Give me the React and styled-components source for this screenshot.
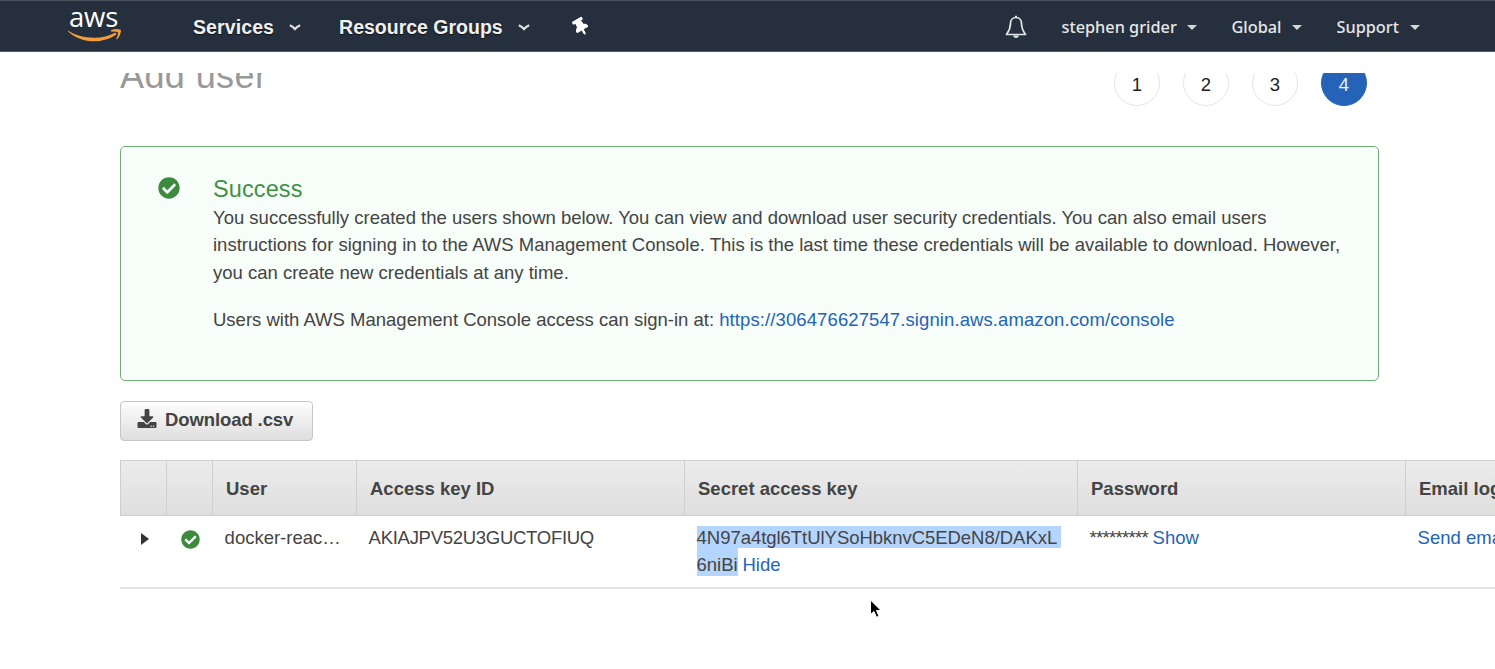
import React from "react";
import styled, { createGlobalStyle } from "styled-components";
import { FaCheckCircle, FaDownload, FaThumbtack } from "react-icons/fa";

const GlobalStyle = createGlobalStyle`
  * { box-sizing: border-box; }
  body {
    margin: 0;
    background: #fff;
    color: #444;
    font-family: "Liberation Sans", Arial, sans-serif;
    font-size: 18.5px;
    line-height: 27px;
    overflow: hidden;
  }
`;

const Page = styled.div`
  height: 669px;
  overflow: hidden;
`;

const NavBar = styled.header`
  display: flex;
  align-items: center;
  height: 52px;
  padding: 0 75px 0 67px;
  background: #252f3d;
  border-top: 1px solid #4b535e;
  border-bottom: 1px solid #555d68;
  color: #f0f0f0;
`;

const Logo = styled.svg`
  display: block;
  flex: none;
  width: 56px;
  height: 40px;
  margin-right: 70px;
  overflow: visible;
`;

const MainMenu = styled.a`
  display: flex;
  align-items: center;
  gap: 15px;
  margin-right: 38px;
  padding-top: 2px;
  font-size: 19.5px;
  font-weight: 700;
  letter-spacing: ${(p) => p.$spacing || "0"};
  text-shadow: 0 1px 1px #111;
  white-space: nowrap;
`;

const Pin = styled(FaThumbtack)`
  width: 14px;
  height: 18px;
  margin: 1px 0 0 6px;
  color: #fff;
  transform: rotate(-30deg);
`;

const Tools = styled.div`
  display: flex;
  align-items: center;
  margin-left: auto;
`;

const Bell = styled.svg`
  display: block;
  width: 22px;
  height: 24px;
  margin: 1px 34px 0 0;
`;

const ToolMenu = styled.a`
  display: flex;
  align-items: center;
  justify-content: space-between;
  width: ${(p) => p.$width}px;
  margin-left: ${(p) => p.$before || 0}px;
  padding: 2px 0 0 0.5px;
  color: #e6e7e8;
  font-family: "Noto Sans", "Open Sans", sans-serif;
  font-size: 16.3px;
  font-weight: 500;
  white-space: nowrap;
`;

const Caret = styled.span`
  border: 5px solid transparent;
  border-top-color: #d5d5d5;
  border-bottom: 0;
`;

const Content = styled.main`
  padding: 21px 0 0 120px;
`;

const TitleRow = styled.div`
  display: flex;
  justify-content: space-between;
  align-items: flex-end;
  width: 1247px;
  height: 34px;
  overflow: hidden;
`;

const Title = styled.h1`
  margin: 0 0 13px;
  color: #999;
  font-size: 36px;
  line-height: 36px;
  font-weight: 400;
  letter-spacing: 0.4px;
`;

const Steps = styled.div`
  display: flex;
  gap: 23px;
`;

const Step = styled.span`
  display: flex;
  align-items: center;
  justify-content: center;
  width: 46px;
  height: 46px;
  margin-bottom: 1px;
  padding-top: 3px;
  border: 1px solid ${(p) => (p.$active ? "#2563b8" : "#e4e4e4")};
  border-radius: 50%;
  background: ${(p) => (p.$active ? "#2563b8" : "#fff")};
  color: ${(p) => (p.$active ? "#e6f1ff" : "#222")};
`;

const Alert = styled.section`
  display: flex;
  width: 1259px;
  height: 235px;
  margin-top: 39px;
  padding: 28px 20px 0 37px;
  border: 1px solid #6fb070;
  border-radius: 5px;
  background: #f7fdf9;
`;

const Check = styled(FaCheckCircle)`
  display: block;
  flex: none;
  width: ${(p) => p.$size}px;
  height: ${(p) => p.$size}px;
  color: #3c8a3e;
`;

const AlertIcon = styled.div`
  flex: none;
  width: 55px;
  padding-top: 2px;
`;

const AlertTitle = styled.h2`
  margin: 0;
  color: #3f9142;
  font-size: 23.5px;
  line-height: 29px;
  font-weight: 400;
  letter-spacing: 0.1px;
`;

const AlertText = styled.p`
  margin: 0 0 20px;
  line-height: 27.3px;
  white-space: nowrap;
`;

const Line = styled.span`
  display: block;
`;

const Link = styled.a`
  color: #2364b8;
  letter-spacing: ${(p) => p.$spacing || "inherit"};
`;

const Download = styled.button`
  display: flex;
  align-items: center;
  gap: 8px;
  width: 193px;
  height: 40px;
  margin: 20px 0 19px;
  padding: 0 0 2px 16px;
  border: 1px solid #c6c6c6;
  border-radius: 4px;
  background: linear-gradient(#fdfdfd, #dedede);
  color: #444;
  font: 700 18.5px "Liberation Sans", Arial, sans-serif;
  letter-spacing: -0.1px;
`;

const DownloadIcon = styled(FaDownload)`
  width: 20px;
  height: 19px;
  margin-top: -4px;
`;

const Grid = styled.div`
  display: grid;
  grid-template-columns: 46px 46px 144px 328px 393px 328px 200px;
`;

const HeadCell = styled.div`
  height: 56px;
  padding: 14px 0 0 13px;
  border: solid #cfcfcf;
  border-width: 1px 0 1px 1px;
  background: linear-gradient(#ececec, #dedede);
  font-weight: 700;
  white-space: nowrap;
`;

const Cell = styled.div`
  height: 73px;
  padding: ${(p) => p.$pad || "8px 0 0 12.6px"};
  border-bottom: 2px solid #e4e4e4;
  letter-spacing: ${(p) => p.$spacing || "inherit"};
  white-space: nowrap;
`;

const Expander = styled.span`
  display: block;
  width: 0;
  border: solid transparent;
  border-width: 6.5px 0 6.5px 8px;
  border-left-color: #333;
`;

const KeyLine = styled.div`
  display: flex;
  align-items: baseline;
  gap: 5px;
  height: ${(p) => p.$height}px;
`;

const Selected = styled.mark`
  height: ${(p) => (p.$last ? 28 : 22)}px;
  padding: ${(p) => (p.$last ? "3px 0 0" : "0 4px 0 0")};
  background: #b4d5fe;
  color: inherit;
  line-height: ${(p) => (p.$last ? 27 : 23)}px;
`;

const Stars = styled.span`
  display: inline-block;
  width: 63px;
  letter-spacing: -0.7px;
`;

const Pointer = styled.svg`
  position: absolute;
  left: 869px;
  top: 599px;
  width: 13px;
  height: 20px;
`;

const Chevron = () => (
  <svg width="12" height="7" viewBox="0 0 12 7" fill="none">
    <path d="M.8 1.2Q4 2.5 6 5Q8 2.5 11.2 1.2" stroke="#e0e0e0" strokeWidth="2.2" />
  </svg>
);

const AwsLogo = () => (
  <Logo viewBox="0 0 56 40">
    <text x="2" y="20.5" fontFamily="'Open Sans', 'Noto Sans', sans-serif" fontSize="27.5" fontWeight="500" letterSpacing="-0.2" fill="#fff">aws</text>
    <path d="M1 24.5C15 33.5 35 34 48.5 26.5L49.5 28.5C35 38.5 14 37.5 1 25.5Z" fill="#f29d38" />
    <path d="M44 24Q50 22 54 24Q54 29 50 33.5L49.2 33Q51.5 29 51 26.3Q48 25 44.5 25.7Z" fill="#f29d38" />
  </Logo>
);

const headings = ["", "", "User", "Access key ID", "Secret access key", "Password", "Email login instructions"];

export default function App() {
  return (
    <Page>
      <GlobalStyle />
      <NavBar>
        <AwsLogo />
        <MainMenu $spacing="0.1px">Services <Chevron /></MainMenu>
        <MainMenu>Resource Groups <Chevron /></MainMenu>
        <Pin />
        <Tools>
          <Bell viewBox="0 0 22 24" fill="none">
            <path d="M11 2.5C7.5 2.5 5.5 5 5.5 8.5C5.5 14 4 16 1.5 19.5H20.5C18 16 16.5 14 16.5 8.5C16.5 5 14.5 2.5 11 2.5Z" stroke="#e4e6e8" strokeWidth="1.7" strokeLinejoin="round" />
            <path d="M11 .8V2.5" stroke="#e4e6e8" strokeWidth="2" />
            <path d="M8 20.5H14C13.5 23.7 8.5 23.7 8 20.5Z" fill="#e4e6e8" />
          </Bell>
          <ToolMenu $width={136}>stephen grider <Caret /></ToolMenu>
          <ToolMenu $width={71} $before={34}>Global <Caret /></ToolMenu>
          <ToolMenu $width={84} $before={34}>Support <Caret /></ToolMenu>
        </Tools>
      </NavBar>
      <Content>
        <TitleRow>
          <Title>Add user</Title>
          <Steps>
            {[1, 2, 3, 4].map((n) => <Step key={n} $active={n === 4}>{n}</Step>)}
          </Steps>
        </TitleRow>
        <Alert>
          <AlertIcon><Check $size={22} /></AlertIcon>
          <div>
            <AlertTitle>Success</AlertTitle>
            <AlertText>
              <Line>You successfully created the users shown below. You can view and download user security credentials. You can also email users</Line>
              <Line>instructions for signing in to the AWS Management Console. This is the last time these credentials will be available to download. However,</Line>
              <Line>you can create new credentials at any time.</Line>
            </AlertText>
            <AlertText>
              Users with AWS Management Console access can sign-in at: <Link $spacing="0.1px">https://306476627547.signin.aws.amazon.com/console</Link>
            </AlertText>
          </div>
        </Alert>
        <Download><DownloadIcon />Download .csv</Download>
        <Grid>
          {headings.map((h, i) => <HeadCell key={i}>{h}</HeadCell>)}
          <Cell $pad="17px 0 0 21px"><Expander /></Cell>
          <Cell $pad="14px 0 0 15.4px"><Check $size={19} /></Cell>
          <Cell>docker-reac…</Cell>
          <Cell $spacing="-0.28px">AKIAJPV52U3GUCTOFIUQ</Cell>
          <Cell $pad="10px 0 0 12.6px" $spacing="-0.04px">
            <KeyLine $height={22}><Selected>4N97a4tgl6TtUlYSoHbknvC5EDeN8/DAKxL</Selected></KeyLine>
            <KeyLine $height={28}><Selected $last>6niBi</Selected><Link>Hide</Link></KeyLine>
          </Cell>
          <Cell><Stars>*********</Stars><Link>Show</Link></Cell>
          <Cell><Link>Send email</Link></Cell>
        </Grid>
      </Content>
      <Pointer viewBox="0 0 13 20">
        <path d="M1.5 1V15.5L5 12.5L7.5 18.3L10 17.2L7.5 11.5H12Z" fill="#000" stroke="#fff" />
      </Pointer>
    </Page>
  );
}
